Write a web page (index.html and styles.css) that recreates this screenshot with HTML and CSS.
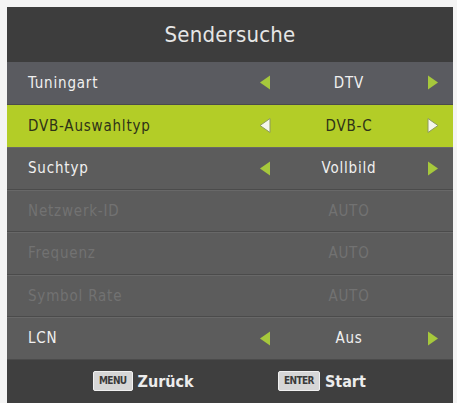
FILE: index.html
```html
<!DOCTYPE html>
<html lang="de">
<head>
    <meta charset="UTF-8">
    <meta name="viewport" content="width=device-width, initial-scale=1.0">
    <title>Sendersuche</title>
    <link rel="stylesheet" href="styles.css">
</head>
<body>
    <div class="screen">
        <div class="osd">
            <div class="osd-title">Sendersuche</div>
            <div class="osd-list">
                <div class="osd-row first">
                    <span class="label">Tuningart</span>
                    <svg class="arrow" viewBox="0 0 12 14"><polygon points="11,0 11,14 1,7"/></svg>
                    <span class="value">DTV</span>
                    <svg class="arrow" viewBox="0 0 12 14"><polygon points="1,0 1,14 11,7"/></svg>
                </div>
                <div class="osd-row active">
                    <span class="label">DVB-Auswahltyp</span>
                    <svg class="arrow" viewBox="0 0 12 14"><polygon points="11,0 11,14 1,7"/></svg>
                    <span class="value">DVB-C</span>
                    <svg class="arrow" viewBox="0 0 12 14"><polygon points="1,0 1,14 11,7"/></svg>
                </div>
                <div class="osd-row">
                    <span class="label">Suchtyp</span>
                    <svg class="arrow" viewBox="0 0 12 14"><polygon points="11,0 11,14 1,7"/></svg>
                    <span class="value">Vollbild</span>
                    <svg class="arrow" viewBox="0 0 12 14"><polygon points="1,0 1,14 11,7"/></svg>
                </div>
                <div class="osd-row disabled">
                    <span class="label">Netzwerk-ID</span>
                    <span class="value">AUTO</span>
                </div>
                <div class="osd-row disabled">
                    <span class="label">Frequenz</span>
                    <span class="value">AUTO</span>
                </div>
                <div class="osd-row disabled">
                    <span class="label">Symbol Rate</span>
                    <span class="value">AUTO</span>
                </div>
                <div class="osd-row">
                    <span class="label">LCN</span>
                    <svg class="arrow" viewBox="0 0 12 14"><polygon points="11,0 11,14 1,7"/></svg>
                    <span class="value">Aus</span>
                    <svg class="arrow" viewBox="0 0 12 14"><polygon points="1,0 1,14 11,7"/></svg>
                </div>
            </div>
            <div class="osd-footer">
                <div class="hint"><span class="key">MENU</span> Zurück</div>
                <div class="hint"><span class="key">ENTER</span> Start</div>
            </div>
        </div>
    </div>
</body>
</html>
```

FILE: styles.css
```css
* { box-sizing: border-box; margin: 0; padding: 0; }
body { background: #f4f4f4; font-family: 'DejaVu Sans Condensed', 'DejaVu Sans', sans-serif; }
.screen { padding: 7px 4px 0 7px; }
.osd { width: 446px; height: 396px; background: #5c5c5c; display: flex; flex-direction: column; }
.osd-title { height: 55px; background: #3d3d3d; color: #e6e6e6; font-size: 22px; display: flex; align-items: center; justify-content: center; letter-spacing: 0.2px; }
.osd-list { display: flex; flex-direction: column; }
.osd-row { height: 42.5px; display: grid; grid-template-columns: 251px 14px 154px 14px; align-items: center; color: #f0f0f0; font-size: 15px; letter-spacing: 0.8px; border-top: 1px solid #686868; border-bottom: 1px solid #4b4b4b; }
.osd-row.first { background: #5a5b60; border-top: none; }
.osd-row .label { padding-left: 21px; }
.osd-row .value { grid-column: 3; text-align: center; }
.arrow { width: 12px; height: 15px; fill: #a6c83c; justify-self: center; }
.osd-row.active { background: #b3cd27; color: #2e3218; border-color: #b3cd27; }
.osd-row.active .arrow { fill: #f4f6ec; stroke: #8d9a5c; stroke-width: 1; }
.osd-row.disabled { color: #727272; }
.osd-footer { flex: 1; background: #3f3f3f; display: flex; align-items: center; padding-left: 86px; color: #ececec; font-size: 16px; font-weight: bold; }
.hint { display: flex; align-items: center; gap: 5px; }
.hint:first-child { width: 185px; }
.key { background: #d6d6d6; color: #3a3a3a; font-size: 10px; font-weight: bold; letter-spacing: -0.6px; padding: 4px 5px; border-radius: 2px; border: 1px solid #f0f0f0; line-height: 10px; }
```
